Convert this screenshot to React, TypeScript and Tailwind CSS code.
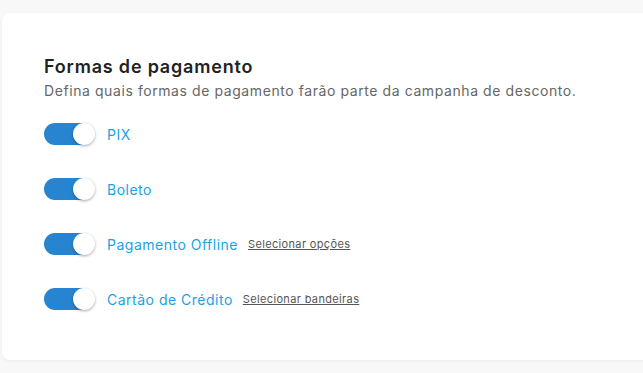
import React from "react";

const rows = [
  { label: "PIX" },
  { label: "Boleto" },
  { label: "Pagamento Offline", link: "Selecionar opções" },
  { label: "Cartão de Crédito", link: "Selecionar bandeiras" },
];

function Toggle() {
  return (
    <div className="relative h-[22px] w-[51px] shrink-0">
      <div className="absolute inset-y-0 left-0 w-[49px] rounded-full bg-[#2784d1]" />
      <div className="absolute right-0 top-0 h-[22px] w-[22px] rounded-full bg-white shadow-[0_1px_3px_rgba(0,0,0,0.35)]" />
    </div>
  );
}

export default function App() {
  return (
    <div
      className="min-h-[373px] w-[643px] overflow-hidden bg-[#f8f8f8] pl-[2px] pt-[13px]"
      style={{ fontFamily: "Inter, 'Noto Sans', sans-serif" }}
    >
      <div className="h-[347px] w-[660px] rounded-l-[8px] bg-white pl-[42px] pt-[42px] shadow-[0_1px_3px_rgba(0,0,0,0.06)]">
        <h2 className="text-[18px] font-semibold leading-[24px] tracking-[0.8px] text-[#222]">Formas de pagamento</h2>
        <p className="mt-[3px] text-[14px] leading-[18px] tracking-[0.58px] text-[#666]">
          Defina quais formas de pagamento farão parte da campanha de desconto.
        </p>
        <div className="mt-[23px] flex flex-col gap-[33px]">
          {rows.map((r) => (
            <div key={r.label} className="flex h-[22px] items-center">
              <Toggle />
              <span className="ml-[12px] text-[14px] tracking-[0.5px] text-[#1aa2e6]">{r.label}</span>
              {r.link && (
                <span className="ml-[10px] text-[11px] tracking-[0.35px] text-[#555] underline">{r.link}</span>
              )}
            </div>
          ))}
        </div>
      </div>
    </div>
  );
}
